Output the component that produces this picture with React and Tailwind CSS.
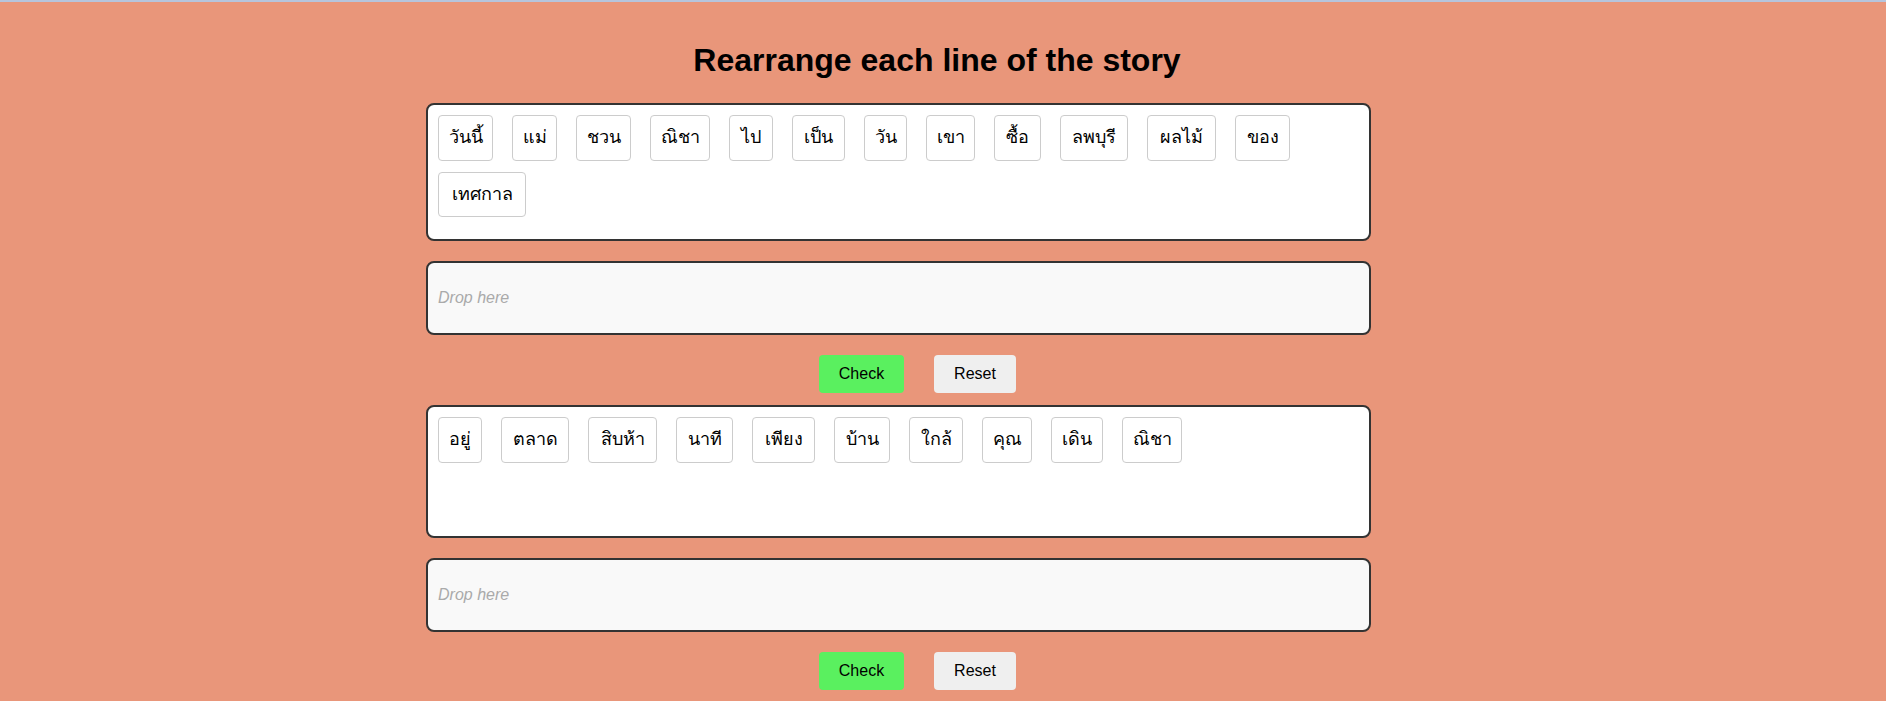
import React from 'react';

const lines = [
  {
    id: 1,
    boxClass: 'pb-[22px]',
    words: [
      { text: 'วันนี้', w: 'w-[55px]' },
      { text: 'แม่', w: 'w-[45px]' },
      { text: 'ชวน', w: 'w-[55px]' },
      { text: 'ณิชา', w: 'w-[60px]' },
      { text: 'ไป', w: 'w-[44px]' },
      { text: 'เป็น', w: 'w-[53px]' },
      { text: 'วัน', w: 'w-[43px]' },
      { text: 'เขา', w: 'w-[49px]' },
      { text: 'ซื้อ', w: 'w-[47px]' },
      { text: 'ลพบุรี', w: 'w-[68px]' },
      { text: 'ผลไม้', w: 'w-[69px]' },
      { text: 'ของ', w: 'w-[55px]' },
      { text: 'เทศกาล', w: 'w-[88px]' },
    ],
  },
  {
    id: 2,
    boxClass: 'pb-[21px] min-h-[133px]',
    words: [
      { text: 'อยู่', w: 'w-[44px]' },
      { text: 'ตลาด', w: 'w-[68px]' },
      { text: 'สิบห้า', w: 'w-[69px]' },
      { text: 'นาที', w: 'w-[57px]' },
      { text: 'เพียง', w: 'w-[63px]' },
      { text: 'บ้าน', w: 'w-[56px]' },
      { text: 'ใกล้', w: 'w-[54px]' },
      { text: 'คุณ', w: 'w-[50px]' },
      { text: 'เดิน', w: 'w-[52px]' },
      { text: 'ณิชา', w: 'w-[60px]' },
    ],
  },
];

const WordTile = ({ text, w }) => (
  <div
    className={`${w} flex h-[45.5px] shrink-0 items-center justify-center whitespace-nowrap rounded-[4px] border border-[#cccccc] bg-white text-[18px] text-black`}
  >
    {text}
  </div>
);

const StoryLine = ({ line }) => (
  <div>
    {/* word bank */}
    <div
      className={`ml-[426px] flex w-[945px] flex-wrap gap-x-[19px] gap-y-[11px] rounded-lg border-2 border-[#333333] bg-white px-[10px] pt-[10px] ${line.boxClass}`}
    >
      {line.words.map((word, i) => (
        <WordTile key={`${line.id}-${i}`} text={word.text} w={word.w} />
      ))}
    </div>

    {/* drop zone */}
    <div className="ml-[426px] mt-[20px] flex h-[74px] w-[945px] items-center rounded-lg border-2 border-[#333333] bg-[#f9f9f9] px-[10px]">
      <span className="text-[16px] italic text-[#aaaaaa]">Drop here</span>
    </div>

    {/* actions */}
    <div className="ml-[819px] mt-[20px] mb-[12px] flex gap-[30px]">
      <button className="h-[38px] w-[85px] rounded-[4px] bg-[#5af05f] text-[16px] text-black">
        Check
      </button>
      <button className="h-[38px] w-[82px] rounded-[4px] bg-[#efefef] text-[16px] text-black">
        Reset
      </button>
    </div>
  </div>
);

const App = () => {
  return (
    <div className="min-h-screen bg-[#e9967a] font-['Liberation_Sans','Noto_Sans',Tahoma,sans-serif]">
      <div className="h-[2px] bg-[#b6c5dd]" />
      <h1 className="mt-[40px] mb-[24px] pr-[12px] text-center text-[32px] font-bold leading-[37px] text-black">
        Rearrange each line of the story
      </h1>
      {lines.map((line) => (
        <StoryLine key={line.id} line={line} />
      ))}
    </div>
  );
};

export default App;
